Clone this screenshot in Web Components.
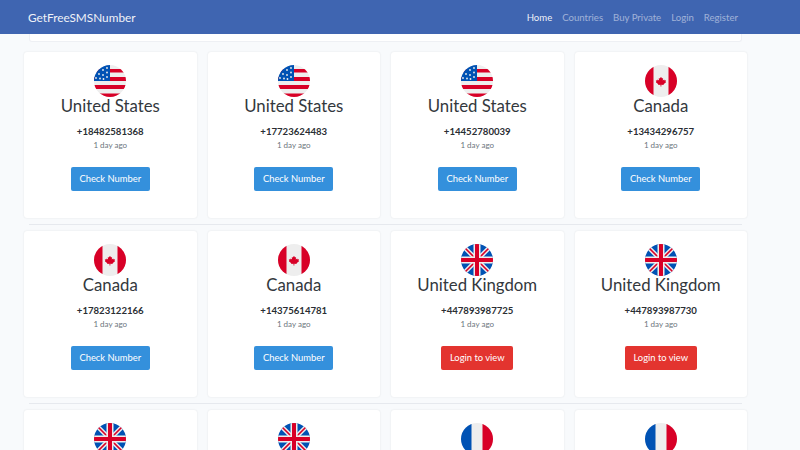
<!DOCTYPE html>
<html>
<head>
<meta charset="utf-8">
<title>GetFreeSMSNumber</title>
<style>
	html, body { margin: 0; height: 100%; overflow: hidden; }
	body { background: #f8fafc; font-family: Lato, "Open Sans", sans-serif; color: #212529; }
</style>
</head>
<body>
<site-nav></site-nav>
<number-list id="list"></number-list>

<script>
'use strict';

const flags = {
	us: `<rect width="32" height="32" fill="#eee"/>
		<path fill="#d80027" d="M0 4h32v3.5H0zM0 12h32v4H0zM0 20h32v4H0zM0 28.5h32V32H0z"/>
		<rect width="16" height="16" fill="#0052b4"/>
		<g fill="#eee"><circle cx="13" cy="3" r=".9"/><circle cx="9" cy="5" r=".9"/><circle cx="13" cy="7.5" r=".9"/><circle cx="5" cy="9" r=".9"/><circle cx="9" cy="10" r=".9"/><circle cx="13" cy="12" r=".9"/><circle cx="2" cy="13" r=".9"/><circle cx="6" cy="13.5" r=".9"/><circle cx="9.500" cy="14" r=".9"/></g>`,
	ca: `<rect width="32" height="32" fill="#eee"/>
		<path fill="#d80027" d="M0 0h8.5v32H0zM23.500 0H32v32h-8.500z"/>
		<path fill="#d80027" transform="translate(16 16.500) scale(.68) translate(-16 -16.500)" d="M16 9.500l1.500 2.700 1.600-.7-.5 3.400 2-1.500.8 1.600 2-.2-.7 2.300.8.500-3.800 3 .4 1.200-3.600-.5V24h-1.200v-2.700l-3.600.5.4-1.200-3.800-3 .8-.5-.7-2.300 2 .2.8-1.600 2 1.500-.5-3.400 1.600.7z"/>`,
	gb: `<rect width="32" height="32" fill="#0052b4"/>
		<path stroke="#eee" stroke-width="4.500" d="M3 3l26 26M29 3L3 29"/>
		<path stroke="#d80027" stroke-width="1.600" d="M3 3l26 26M29 3L3 29"/>
		<path fill="#eee" d="M12.500 0h7v12.500H32v7H19.500V32h-7V19.500H0v-7h12.500z"/>
		<path fill="#d80027" d="M14 0h4v14h14v4H18v14h-4V18H0v-4h14z"/>`,
	fr: `<rect width="32" height="32" fill="#eee"/>
		<rect width="10.500" height="32" fill="#0052b4"/>
		<rect x="21.500" width="10.500" height="32" fill="#d80027"/>`
};

class SiteNav extends HTMLElement {
	constructor() {
		super();
		this.shadow = this.attachShadow({ mode: 'open' });
		this.shadow.innerHTML = `
			<style>
				:host { display: flex; align-items: center; justify-content: space-between; height: 34px; padding: 0 62px 0 28px; background: #3f65b1; }
				.brand { color: #fff; font-size: 11.8px; opacity: .92; }
				nav { display: flex; gap: 10px; font-size: 9.6px; color: rgba(255,255,255,.5); }
				.active { color: rgba(255,255,255,.92); }
			</style>
			<span class="brand">GetFreeSMSNumber</span>
			<nav>
				<span class="active">Home</span><span>Countries</span><span>Buy Private</span><span>Login</span><span>Register</span>
			</nav>
		`;
	}
}

class NumberCard extends HTMLElement {
	constructor() {
		super();
		this.shadow = this.attachShadow({ mode: 'open' });
		const danger = this.getAttribute('locked') !== null;
		// last row is below the fold, only the flag shows
		const body = this.getAttribute('flag-only') !== null ? '' : `
			<h3><slot name="country"></slot></h3>
			<div class="num"><slot name="number"></slot></div>
			<div class="ago">1 day ago</div>
			<button>${danger ? 'Login to view' : 'Check Number'}</button>
		`;
		this.shadow.innerHTML = `
			<style>
				:host { display: flex; flex-direction: column; align-items: center; box-sizing: border-box; height: 166px; padding-top: 13px; background: #fff; border-radius: 3px; box-shadow: 0 0 2px rgba(0,0,0,.1); }
				svg { display: block; width: 32px; height: 32px; border-radius: 50%; flex: none; }
				h3 { margin: -1px 0 0; font-size: 16.8px; font-weight: 400; line-height: 20px; color: #33383d; }
				.num { font-size: 9.6px; font-weight: 700; line-height: 13px; margin-top: 9px; color: #2a2e33; }
				.ago { font-size: 8px; line-height: 10px; margin-top: 1.500px; color: #6c757d; }
				button { margin-top: 17.500px; height: 23.500px; padding: 0 8.500px; border: 0; border-radius: 2px; color: #fff; font: 9.400px Lato, sans-serif; background: ${danger ? '#e3342f' : '#3490dc'}; }
			</style>
			<svg viewBox="0 0 32 32">${flags[this.getAttribute('flag')]}</svg>
			${body}
		`;
	}
}

class NumberRow extends HTMLElement {
	constructor() {
		super();
		this.shadow = this.attachShadow({ mode: 'open' });
		this.shadow.innerHTML = `
			<style>
				:host { display: block; }
				.cards { display: grid; grid-template-columns: repeat(4, 172.5px); column-gap: 11px; }
				.line { width: 713px; height: 1px; margin: 6px 0 6px 5px; background: #e6e9ee; }
			</style>
			<div class="cards"><slot></slot></div>
			<div class="line"></div>
		`;
	}
}

class NumberList extends HTMLElement {
	constructor() {
		super();
		this.shadow = this.attachShadow({ mode: 'open' });
		this.shadow.innerHTML = `
			<style>
				:host { display: block; padding-left: 24px; }
				.top { box-sizing: border-box; width: 713px; height: 8px; margin: 0 0 10px 5px; background: #fff; border: 1px solid #eef0f4; border-top: 0; border-radius: 0 0 3px 3px; }
			</style>
			<div class="top"></div>
			<slot></slot>
		`;
	}
}

customElements.define('site-nav', SiteNav);
customElements.define('number-card', NumberCard);
customElements.define('number-row', NumberRow);
customElements.define('number-list', NumberList);

const rows = [
	[['us','United States','+18482581368'],['us','United States','+17723624483'],['us','United States','+14452780039'],['ca','Canada','+13434296757']],
	[['ca','Canada','+17823122166'],['ca','Canada','+14375614781'],['gb','United Kingdom','+447893987725',1],['gb','United Kingdom','+447893987730',1]],
	[['gb'],['gb'],['fr'],['fr']]
];
const list = document.getElementById('list');
for (const cards of rows) {
	const row = document.createElement('number-row');
	row.innerHTML = cards.map(c => c[1]
		? `<number-card flag="${c[0]}" ${c[3] ? 'locked' : ''}><span slot="country">${c[1]}</span><span slot="number">${c[2]}</span></number-card>`
		: `<number-card flag="${c[0]}" flag-only></number-card>`).join('');
	list.appendChild(row);
}
</script>
</body>
</html>
